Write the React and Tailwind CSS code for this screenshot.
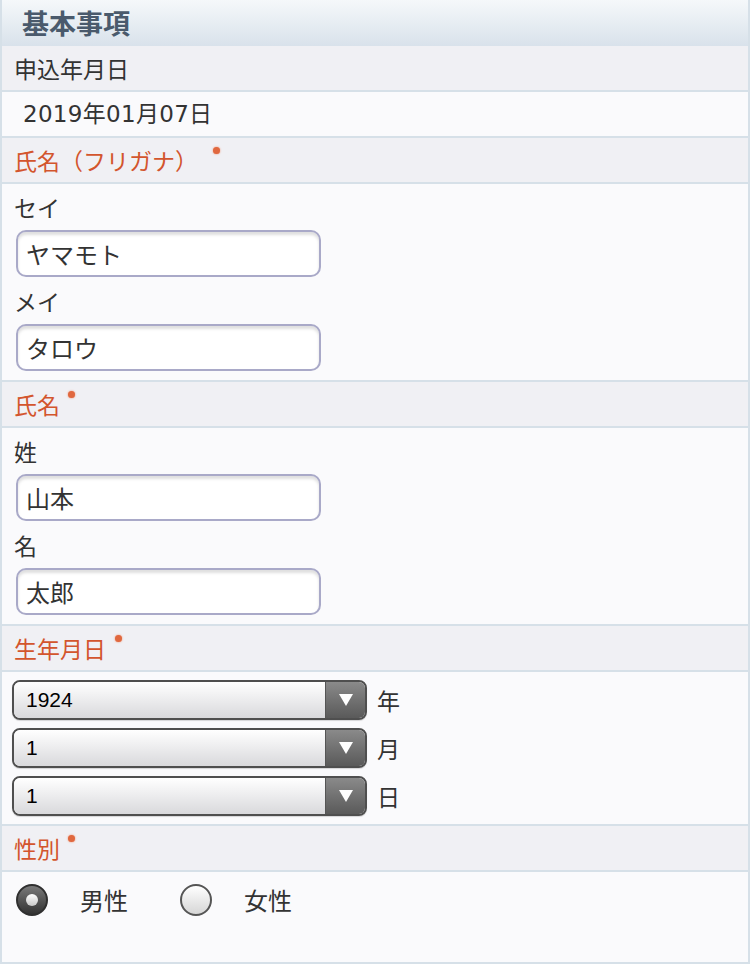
import React from 'react';

const jp = { fontFamily: '"Noto Sans CJK JP", "Noto Sans", sans-serif' };
const sans = { fontFamily: '"Liberation Sans", Arial, sans-serif' };
const dateFont = { fontFamily: '"DejaVu Sans", "Noto Sans CJK JP", sans-serif' };

// section heading row with required mark
const LabelRow = ({ text, required, dotGap = 'ml-[8px]', red }) => (
    <div className="h-[46px] bg-[#f0f0f4] border-b-2 border-[#d6e0e8] flex items-center pl-[12px]">
        <span className={`text-[23px] leading-[30px] ${red ? 'text-[#d3552d]' : 'text-[#333]'}`}>{text}</span>
        {required && (
            <span className={`${dotGap} inline-block w-[7px] h-[7px] rounded-full bg-[#e0683f] shadow-[0_0_2px_#f08a66] -translate-y-[10px]`} />
        )}
    </div>
);

const TextField = ({ label, value }) => (
    <div className="mb-[9px]">
        <div className="h-[30px] leading-[30px] text-[23px] text-[#333] pl-[12px]">{label}</div>
        <input
            readOnly
            defaultValue={value}
            style={jp}
            className="mt-[8px] ml-[14px] w-[305px] h-[47px] rounded-[10px] border-2 border-[#a9a9c8] bg-white px-[8px] text-[24px] text-[#333] outline-none shadow-[inset_0_3px_3px_rgba(0,0,0,0.13)]"
        />
    </div>
);

const SelectBox = ({ value, unit }) => (
    <div className="flex items-center">
        <div className="ml-[10px] w-[355px] h-[40px] rounded-[8px] border-2 border-[#4f4f4f] flex overflow-hidden shadow-[0_1px_1px_rgba(0,0,0,0.15)]">
            <div className="flex-1 bg-gradient-to-b from-white to-[#d9d9dc] flex items-center pl-[12px]">
                <span style={sans} className="text-[21px] text-black">{value}</span>
            </div>
            <div className="w-[40px] bg-gradient-to-b from-[#8a8a8a] to-[#5a5a5a] flex items-center justify-center border-l border-[#555]">
                <svg width="14" height="12" viewBox="0 0 14 12">
                    <path d="M0 0 L14 0 L7 12 Z" fill="#fff" />
                </svg>
            </div>
        </div>
        <span className="ml-[10px] text-[23px] text-[#333]">{unit}</span>
    </div>
);

const Radio = ({ checked, label }) => (
    <div className="flex items-center">
        {checked ? (
            <div className="w-[32px] h-[32px] rounded-full border-2 border-[#2f2f2f] bg-gradient-to-b from-[#7a7a7a] to-[#333] flex items-center justify-center">
                <div className="w-[12px] h-[12px] rounded-full bg-gradient-to-b from-white to-[#c8c8c8]" />
            </div>
        ) : (
            <div className="w-[32px] h-[32px] rounded-full border-2 border-[#555] bg-gradient-to-b from-white to-[#d6d6d6]" />
        )}
        <span className="ml-[32px] text-[24px] text-[#333]">{label}</span>
    </div>
);

export default function App() {
    return (
        <div style={jp} className="w-[750px] h-[968px] bg-white">
            <div className="w-[750px] h-[964px] border-x-2 border-b-2 border-[#d6e0e8] bg-[#fafafc] flex flex-col">
                {/* header */}
                <div className="h-[46px] bg-gradient-to-b from-[#f5f8fa] to-[#d9e2eb] flex items-center pl-[20px]">
                    <span className="text-[27px] font-bold text-[#4a5a6c] leading-[32px]">基本事項</span>
                </div>

                <LabelRow text="申込年月日" />
                <div className="h-[46px] bg-[#fafafc] border-b-2 border-[#d6e0e8] flex items-center pl-[21px]">
                    <span style={dateFont} className="text-[23px] tracking-[0.3px] text-[#333]">2019年01月07日</span>
                </div>

                <LabelRow text="氏名（フリガナ）" required red dotGap="ml-[15px]" />
                <div className="h-[198px] border-b-2 border-[#d6e0e8] pt-[8px]">
                    <TextField label="セイ" value="ヤマモト" />
                    <TextField label="メイ" value="タロウ" />
                </div>

                <LabelRow text="氏名" required red />
                <div className="h-[198px] border-b-2 border-[#d6e0e8] pt-[8px]">
                    <TextField label="姓" value="山本" />
                    <TextField label="名" value="太郎" />
                </div>

                <LabelRow text="生年月日" required red dotGap="ml-[9px]" />
                <div className="h-[154px] border-b-2 border-[#d6e0e8] pt-[8px] flex flex-col gap-[8px]">
                    <SelectBox value="1924" unit="年" />
                    <SelectBox value="1" unit="月" />
                    <SelectBox value="1" unit="日" />
                </div>

                <LabelRow text="性別" required red />
                <div className="flex-1 pt-[10px] pl-[14px] flex items-start gap-[52px]">
                    <Radio checked label="男性" />
                    <Radio label="女性" />
                </div>
            </div>
        </div>
    );
}
